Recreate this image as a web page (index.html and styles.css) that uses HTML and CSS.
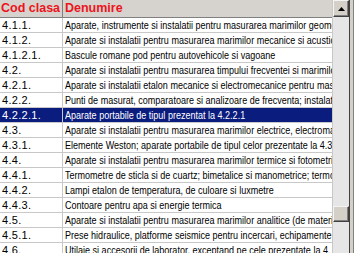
FILE: index.html
```html
<!DOCTYPE html>
<html>
<head>
<meta charset="utf-8">
<link rel="stylesheet" href="styles.css">
</head>
<body>
<div class="window">
  <div class="grid">
    <div class="row head">
      <div class="cell code">Cod clasa</div>
      <div class="cell desc">Denumire</div>
    </div>
    <div class="row"><div class="cell code">4.1.1.</div><div class="cell desc"><span class="txt">Aparate, instrumente si instalatii pentru masurarea marimilor geometrice</span></div></div>
    <div class="row"><div class="cell code">4.1.2.</div><div class="cell desc"><span class="txt">Aparate si instalatii pentru masurarea marimilor mecanice si acustice</span></div></div>
    <div class="row"><div class="cell code">4.1.2.1.</div><div class="cell desc"><span class="txt">Bascule romane pod pentru autovehicole si vagoane</span></div></div>
    <div class="row"><div class="cell code">4.2.</div><div class="cell desc"><span class="txt">Aparate si instalatii pentru masurarea timpului frecventei si marimilor</span></div></div>
    <div class="row"><div class="cell code">4.2.1.</div><div class="cell desc"><span class="txt">Aparate si instalatii etalon mecanice si electromecanice pentru masurarea</span></div></div>
    <div class="row"><div class="cell code">4.2.2.</div><div class="cell desc"><span class="txt">Punti de masurat, comparatoare si analizoare de frecventa; instalatii</span></div></div>
    <div class="row selected"><div class="cell code">4.2.2.1.</div><div class="cell desc"><span class="txt">Aparate portabile de tipul prezentat la 4.2.2.1</span></div></div>
    <div class="row"><div class="cell code">4.3.</div><div class="cell desc"><span class="txt">Aparate si instalatii pentru masurarea marimilor electrice, electromagnetice</span></div></div>
    <div class="row"><div class="cell code">4.3.1.</div><div class="cell desc"><span class="txt">Elemente Weston; aparate portabile de tipul celor prezentate la 4.3.</span></div></div>
    <div class="row"><div class="cell code">4.4.</div><div class="cell desc"><span class="txt">Aparate si instalatii pentru masurarea marimilor termice si fotometrice</span></div></div>
    <div class="row"><div class="cell code">4.4.1.</div><div class="cell desc"><span class="txt">Termometre de sticla si de cuartz; bimetalice si manometrice; termocupluri</span></div></div>
    <div class="row"><div class="cell code">4.4.2.</div><div class="cell desc"><span class="txt">Lampi etalon de temperatura, de culoare si luxmetre</span></div></div>
    <div class="row"><div class="cell code">4.4.3.</div><div class="cell desc"><span class="txt">Contoare pentru apa si energie termica</span></div></div>
    <div class="row"><div class="cell code">4.5.</div><div class="cell desc"><span class="txt">Aparate si instalatii pentru masurarea marimilor analitice (de materiale)</span></div></div>
    <div class="row"><div class="cell code">4.5.1.</div><div class="cell desc"><span class="txt">Prese hidraulice, platforme seismice pentru incercari, echipamente</span></div></div>
    <div class="row"><div class="cell code">4.6.</div><div class="cell desc"><span class="txt">Utilaje si accesorii de laborator, exceptand pe cele prezentate la 4.</span></div></div>
  </div>
  <div class="scrollbar">
    <div class="btn">
      <svg width="7" height="4" viewBox="0 0 7 4"><path d="M3.5 0 L7 4 L0 4 Z" fill="#000"/></svg>
    </div>
    <div class="track">
      <div class="thumb"></div>
    </div>
  </div>
  <div class="frame"></div>
</div>
</body>
</html>
```
FILE: styles.css
```css
html, body {
  margin: 0;
  padding: 0;
  background: #fff;
}
.window {
  display: flex;
  width: 354px;
  height: 253px;
  overflow: hidden;
}
.grid {
  flex: 1;
  min-width: 0;
  display: flex;
  flex-direction: column;
  background: #fff;
}
.row {
  display: grid;
  grid-template-columns: 63px 1fr;
  height: 15px;
  box-sizing: border-box;
  border-bottom: 1px solid #c8c8c8;
  font-family: "Liberation Sans", Arial, sans-serif;
  font-size: 11px;
  line-height: 14px;
  color: #000;
  flex: none;
}
.cell {
  white-space: nowrap;
  overflow: hidden;
  box-sizing: border-box;
}
.code {
  padding-left: 2px;
  border-right: 1px solid #c8c8c8;
  letter-spacing: 0.3px;
}
.desc {
  padding-left: 2px;
  font-size: 11.5px;
}
.txt {
  display: inline-block;
  transform: scaleX(0.785);
  transform-origin: 0 50%;
}
.row.head {
  height: 18px;
  background: #d6d3ce;
  border-bottom: 1px solid #808080;
  font-weight: bold;
  font-size: 12.5px;
  line-height: 17px;
  color: #ec1420;
}
.row.head .code {
  border-right: 1px solid #808080;
  letter-spacing: 0;
  padding-left: 1px;
}
.row.head .desc {
  font-size: 12.5px;
}
.row.selected {
  background: #0a1c7e;
  color: #fff;
}
.scrollbar {
  width: 16px;
  flex: none;
  display: flex;
  flex-direction: column;
  background: #e6e6e6;
  border-left: 1px solid #c8c8c8;
}
.btn, .thumb {
  height: 17px;
  box-sizing: border-box;
  background: #d4d0c8;
  border-top: 1px solid #f4f4f4;
  border-left: 1px solid #f4f4f4;
  border-right: 1px solid #404040;
  border-bottom: 1px solid #404040;
  box-shadow: inset -1px -1px 0 #808080;
  flex: none;
}
.btn {
  display: flex;
  align-items: center;
  justify-content: center;
}
.track {
  flex: 1;
  display: flex;
  flex-direction: column;
}
.thumb {
  height: 16px;
  margin-top: 189px;
}
.frame {
  width: 5px;
  flex: none;
  box-sizing: border-box;
  background: #d4d0c8;
  border-left: 1px solid #404040;
  border-right: 1px solid #808080;
}
```
